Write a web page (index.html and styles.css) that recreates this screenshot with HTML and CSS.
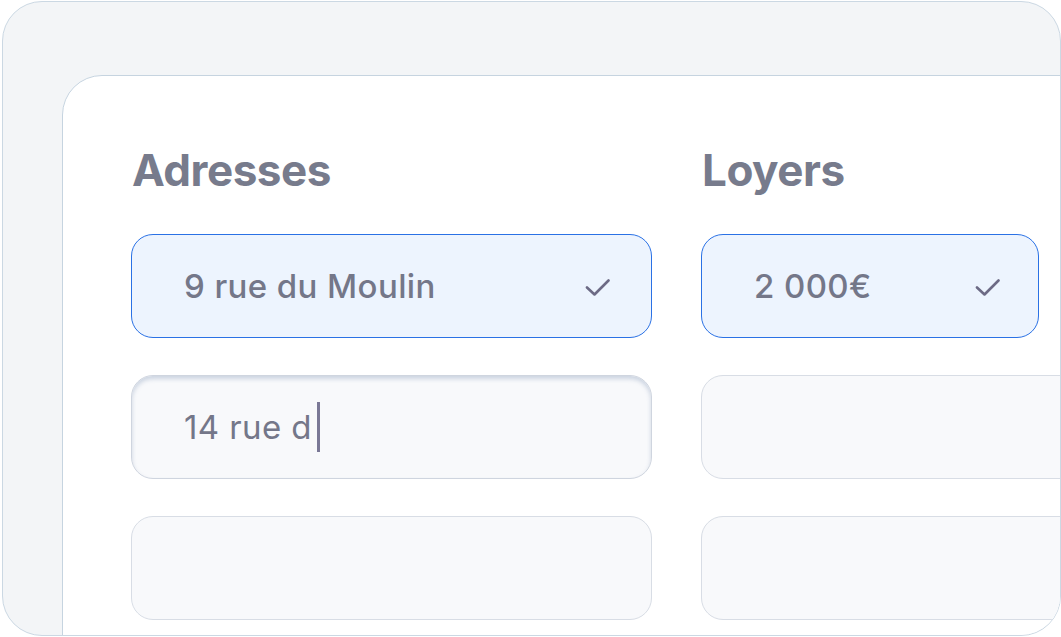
FILE: index.html
```html
<!DOCTYPE html>
<html lang="fr">
<head>
    <meta charset="UTF-8">
    <meta name="viewport" content="width=device-width, initial-scale=1.0">
    <title>Adresses et loyers</title>
    <link rel="stylesheet" href="styles.css">
</head>
<body>
    <div class="frame">
        <div class="card">
            <div class="column column-address">
                <h2>Adresses</h2>
                <div class="field filled">
                    <span class="value">9 rue du Moulin</span>
                    <svg class="check" width="26" height="20" viewBox="0 0 26 20"><path d="M2 11.5l7.5 7 14-14" fill="none" stroke="#6c6a85" stroke-width="2.6" stroke-linecap="round" stroke-linejoin="round"/></svg>
                </div>
                <div class="field typing">
                    <span class="value">14 rue d</span><span class="caret"></span>
                </div>
                <div class="field"></div>
            </div>
            <div class="column column-rent">
                <h2>Loyers</h2>
                <div class="field filled short">
                    <span class="value">2 000€</span>
                    <svg class="check" width="26" height="20" viewBox="0 0 26 20"><path d="M2 11.5l7.5 7 14-14" fill="none" stroke="#6c6a85" stroke-width="2.6" stroke-linecap="round" stroke-linejoin="round"/></svg>
                </div>
                <div class="field"></div>
                <div class="field"></div>
            </div>
        </div>
    </div>
</body>
</html>
```

FILE: styles.css
```css
body {
    margin: 0;
    padding: 0;
    background-color: #ffffff;
    font-family: Inter, "Noto Sans", sans-serif;
    overflow: hidden;
}

.frame {
    box-sizing: border-box;
    margin: 1px 0 0 2px;
    height: 635px;
    padding: 73px 0 0 59px;
    background-color: #f3f5f7;
    border: 1px solid #cbd8e3;
    border-radius: 40px;
    overflow: hidden;
}

.card {
    box-sizing: border-box;
    display: flex;
    gap: 49px;
    width: 1200px;
    height: 640px;
    padding: 68px 0 0 68px;
    background-color: #ffffff;
    border: 1px solid #c6d4e0;
    border-radius: 40px 0 0 0;
}

.column {
    display: flex;
    flex-direction: column;
    gap: 37px;
}

.column-address {
    width: 521px;
}

.column-rent {
    width: 521px;
}

h2 {
    margin: 0 0 3px 1px;
    height: 50px;
    font-size: 44px;
    font-weight: 700;
    line-height: 52px;
    letter-spacing: -0.5px;
    color: #777b8c;
}

.field {
    box-sizing: border-box;
    display: flex;
    align-items: center;
    height: 104px;
    padding: 0 40px 0 52px;
    background-color: #f8f9fb;
    border: 1.5px solid #d8dde5;
    border-radius: 22px;
}

.field.filled {
    justify-content: space-between;
    background-color: #edf4fe;
    border-color: #2a71e5;
}

.field.short {
    width: 338px;
    padding-right: 37px;
}

.field.typing {
    border-color: #cfd5df;
    box-shadow: inset 0 3px 4px rgba(150, 168, 196, 0.45);
}

.value {
    font-size: 33px;
    font-weight: 500;
    letter-spacing: 0.4px;
    color: #747789;
}

.typing .value {
    font-weight: 400;
}

.caret {
    display: inline-block;
    width: 3px;
    height: 50px;
    margin-left: 5px;
    background-color: #7a7896;
}

.check {
    display: block;
}
```
